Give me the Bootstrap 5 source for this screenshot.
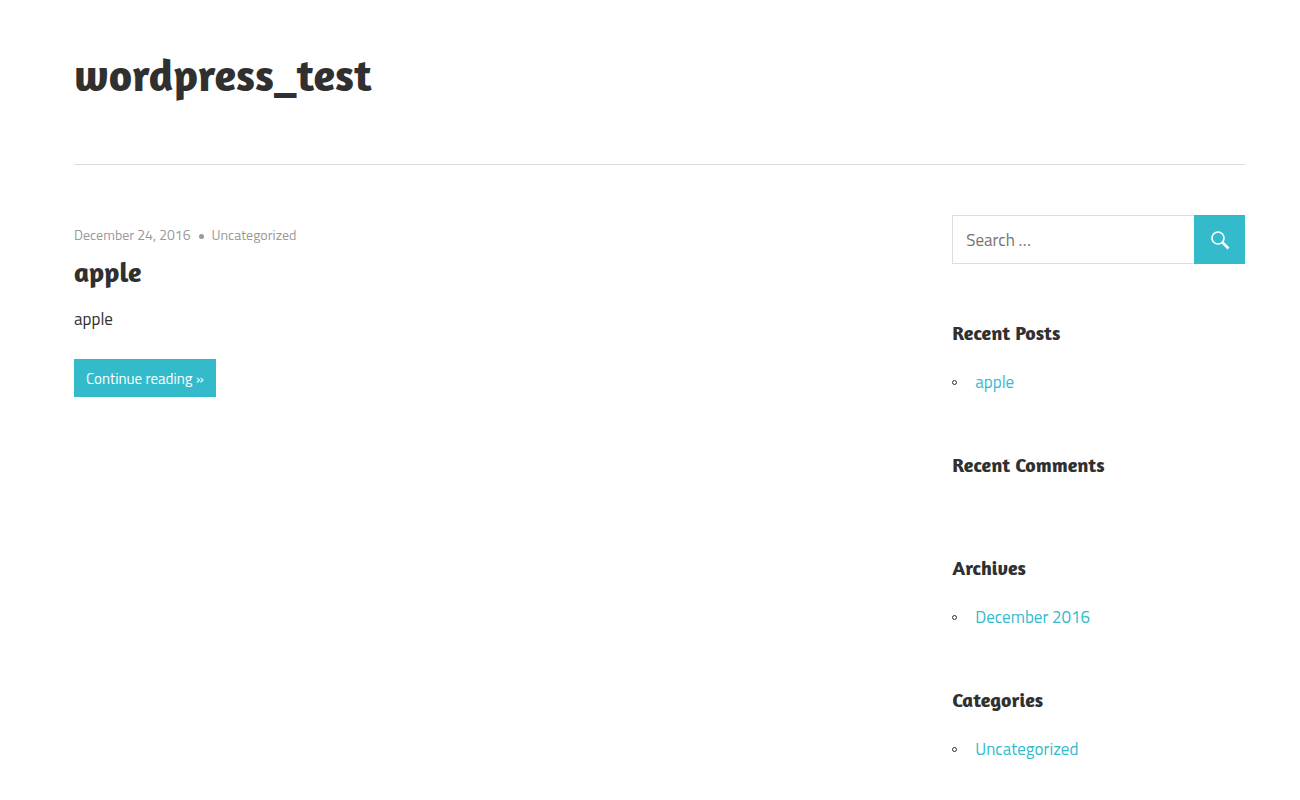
<!DOCTYPE html>
<html lang="en">
<head>
<meta charset="utf-8">
<meta name="viewport" content="width=device-width, initial-scale=1">
<title>wordpress_test</title>
<link href="https://cdn.jsdelivr.net/npm/bootstrap@5.3.0/dist/css/bootstrap.min.css" rel="stylesheet">
<style>
  :root { --accent: #33bbcc; --ink: #303030; --muted: #999; --rule: #ddd; }
  body { font-family: "Titillium Web", Roboto, sans-serif; font-size: 17px; line-height: 28px; color: var(--ink); }
  h1, h2, h3 { font-family: Amaranth, Lato, sans-serif; font-weight: 700; margin: 0; }
  a { color: var(--accent); text-decoration: none; }
  a:hover { color: var(--ink); }
  .page { padding: 0 55px 0 74px; }
  .site-header { padding: 43px 0 57px; border-bottom: 1px solid var(--rule); }
  .site-title { font-size: 45px; line-height: 64px; }
  .site-title a, .entry-title a { color: var(--ink); }
  .site-content { padding-top: 50px; }
  .entry { padding-top: 8px; }
  .entry-meta { font-size: 14px; line-height: 24px; color: var(--muted); gap: 8px; }
  .entry-meta a { color: var(--muted); }
  .meta-dot { width: 5px; height: 5px; margin-top: 2px; border-radius: 50%; background: var(--muted); }
  .entry-title { font-size: 28px; line-height: 40px; margin: 5px 0 13px; }
  .entry-text { margin-bottom: 26px; }
  .btn-accent { background: var(--accent); color: #fff; font-size: 15px; line-height: 24px; padding: 8px 12px 6px; border: 0; }
  .btn-accent:hover { background: var(--ink); color: #fff; }
  .search-field { height: 49px; padding: 0 13px; font-size: 17px; border: 1px solid var(--rule); border-right: 0; color: var(--ink); }
  .search-field::placeholder { color: #757575; }
  .input-group > .search-submit { width: 51px; padding: 0; margin-left: 0; }
  .widget { margin-top: 55px; }
  .widget-title { font-size: 20px; line-height: 28px; }
  .widget-list { margin: 21px 0 0; }
  .widget-list li { display: flex; align-items: center; gap: 18px; }
  .widget-list li::before { content: ""; width: 5px; height: 5px; border: 1px solid var(--ink); border-radius: 50%; }
  .widget-list:empty { margin: 0; padding-top: 20px; }
</style>
</head>
<body>
<div class="page">
  <header class="site-header">
    <h1 class="site-title"><a href="#">wordpress_test</a></h1>
  </header>
  <div class="site-content row g-0">
    <main class="col-9">
      <article class="entry">
        <div class="entry-meta d-flex align-items-center">
          <a href="#">December 24, 2016</a><span class="meta-dot"></span><a href="#">Uncategorized</a>
        </div>
        <h2 class="entry-title"><a href="#">apple</a></h2>
        <p class="entry-text">apple</p>
        <a class="btn btn-accent rounded-0" href="#">Continue reading »</a>
      </article>
    </main>
    <aside class="col-3">
      <form class="input-group" role="search">
        <input class="form-control rounded-0 search-field" type="search" aria-label="Search for" placeholder="Search …">
        <button class="btn btn-accent rounded-0 search-submit" type="submit" aria-label="Search">
          <svg width="20" height="20" viewBox="0 0 20 20" fill="none" stroke="#fff" aria-hidden="true"><circle cx="8" cy="7" r="6" stroke-width="1.700"/><path d="M12.500 11.500l6 6" stroke-width="2.700"/></svg>
        </button>
      </form>
      <section class="widget">
        <h3 class="widget-title">Recent Posts</h3>
        <ul class="widget-list list-unstyled"><li><a href="#">apple</a></li></ul>
      </section>
      <section class="widget">
        <h3 class="widget-title">Recent Comments</h3>
        <ul class="widget-list list-unstyled"></ul>
      </section>
      <section class="widget">
        <h3 class="widget-title">Archives</h3>
        <ul class="widget-list list-unstyled"><li><a href="#">December 2016</a></li></ul>
      </section>
      <section class="widget">
        <h3 class="widget-title">Categories</h3>
        <ul class="widget-list list-unstyled"><li><a href="#">Uncategorized</a></li></ul>
      </section>
    </aside>
  </div>
</div>
<script src="https://cdn.jsdelivr.net/npm/bootstrap@5.3.0/dist/js/bootstrap.bundle.min.js"></script>
</body>
</html>
